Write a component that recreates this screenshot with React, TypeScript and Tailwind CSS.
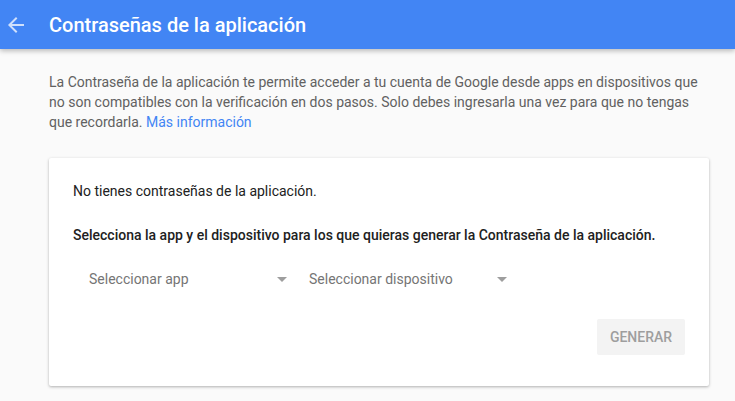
import React from "react";

function Arrow() {
  return (
    <svg width="24" height="24" viewBox="0 0 24 24" className="block">
      <path d="M20 11H7.83l5.59-5.59L12 4l-8 8 8 8 1.41-1.41L7.83 13H20v-2z" fill="rgba(255,255,255,0.75)" />
    </svg>
  );
}

function Caret() {
  return (
    <svg width="10" height="5" viewBox="0 0 10 5" className="block">
      <path d="M0 0h10L5 5z" fill="#9e9e9e" />
    </svg>
  );
}

export default function App() {
  return (
    <div className="w-[735px] h-[401px] bg-[#fafafa] overflow-hidden" style={{ fontFamily: "Roboto, 'Liberation Sans', sans-serif" }}>
      <div className="h-[49px] bg-[#4285f4] flex items-center pl-[4px] shadow-[0_2px_5px_rgba(0,0,0,0.26)] relative">
        <Arrow />
        <div className="ml-[21px] text-white text-[20px] font-medium">Contraseñas de la aplicación</div>
      </div>
      <div className="pl-[49px] pr-[26px] pt-[23px] text-[14px] leading-[20px] text-[#616161]">
        La Contraseña de la aplicación te permite acceder a tu cuenta de Google desde apps en dispositivos que no son compatibles con la verificación en dos pasos. Solo debes ingresarla una vez para que no tengas que recordarla. <span className="text-[#4285f4]">Más información</span>
      </div>
      <div className="ml-[49px] mt-[26px] w-[660px] h-[228px] bg-white rounded-[2px] shadow-[0_1px_3px_rgba(0,0,0,0.3)] pt-[23px] px-[24px]">
        <div className="text-[14px] leading-[20px] text-[#212121]">No tienes contraseñas de la aplicación.</div>
        <div className="mt-[24px] text-[14px] leading-[20px] text-[#212121] font-medium">
          Selecciona la app y el dispositivo para los que quieras generar la Contraseña de la aplicación.
        </div>
        <div className="mt-[24px] flex">
          <div className="w-[220px] h-[20px] pl-[16px] pr-[6px] flex items-center justify-between text-[14px] text-[#757575]">
            <span>Seleccionar app</span>
            <Caret />
          </div>
          <div className="w-[220px] h-[20px] pl-[16px] pr-[6px] flex items-center justify-between text-[14px] text-[#757575]">
            <span>Seleccionar dispositivo</span>
            <Caret />
          </div>
        </div>
        <div className="mt-[30px] flex justify-end">
          <div className="w-[88px] h-[36px] rounded-[2px] bg-[#f3f3f3] flex items-center justify-center text-[14px] font-medium text-[#9e9e9e] uppercase">
            Generar
          </div>
        </div>
      </div>
    </div>
  );
}
